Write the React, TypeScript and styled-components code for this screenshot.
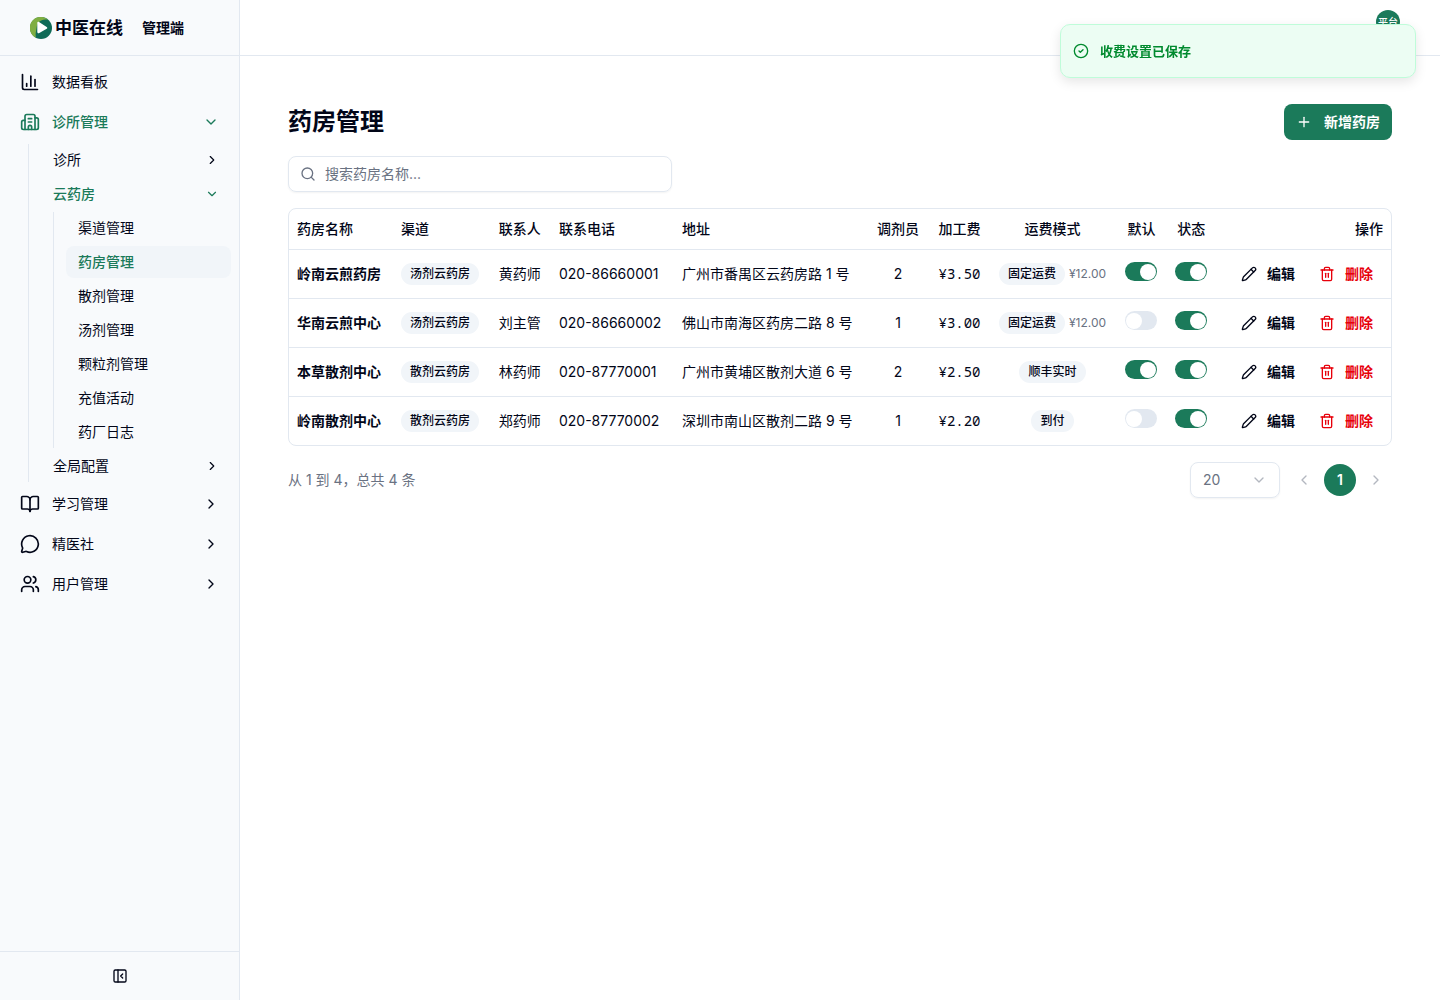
import React, { useState } from 'react';
import styled, { createGlobalStyle, css } from 'styled-components';
import {
  BookOpen,
  Building2,
  ChartColumn,
  ChevronDown,
  ChevronLeft,
  ChevronRight,
  CircleCheck,
  MessageCircle,
  PanelLeftClose,
  Pencil,
  Plus,
  Search,
  Trash2,
  Users,
} from 'lucide-react';

const color = {
  ink: '#020618',
  muted: '#6a7282',
  line: '#e2e8f0',
  soft: '#f1f5f9',
  panel: '#f8fafc',
  brand: '#1b7a5a',
  danger: '#e7000b',
};

const GlobalStyle = createGlobalStyle`
  *, *::before, *::after { box-sizing: border-box; }
  body {
    margin: 0;
    background: #fff;
    color: ${color.ink};
    font: 400 14px/20px Inter, "Noto Sans CJK SC", sans-serif;
    -webkit-font-smoothing: antialiased;
  }
  button, input, select { font: inherit; color: inherit; }
  button { border: 0; padding: 0; background: none; cursor: pointer; }
  a { color: inherit; text-decoration: none; }
  h1, p, ul { margin: 0; padding: 0; }
  ul { list-style: none; }
  svg { flex-shrink: 0; }
`;

const Shell = styled.div`
  display: flex;
  min-height: 100vh;
`;

const Sidebar = styled.aside`
  display: flex;
  flex-direction: column;
  flex: none;
  width: 240px;
  background: ${color.panel};
  border-right: 1px solid ${color.line};
`;

const Brand = styled.div`
  display: flex;
  align-items: center;
  height: 56px;
  padding-left: 30px;
  border-bottom: 1px solid ${color.line};
`;

const BrandName = styled.span`
  margin-left: 3px;
  font-size: 17px;
  line-height: 24px;
  font-weight: 600;
`;

const BrandRole = styled.span`
  margin-left: 19px;
  font-weight: 600;
`;

const Nav = styled.nav`
  flex: 1;
  padding: 8px;
`;

const TopList = styled.ul`
  display: flex;
  flex-direction: column;
  gap: 4px;
`;

const SubList = styled.ul<{ $nested?: boolean }>`
  display: flex;
  flex-direction: column;
  gap: 2px;
  margin-top: ${(p) => (p.$nested ? 2 : 4)}px;
  margin-left: ${(p) => (p.$nested ? 12 : 20)}px;
  padding-left: 12px;
  border-left: 1px solid ${color.line};
`;

const itemStyle = css<{ $open?: boolean }>`
  display: flex;
  align-items: center;
  width: 100%;
  padding: 0 12px;
  border-radius: 8px;
  text-align: left;
  color: ${(p) => (p.$open ? color.brand : color.ink)};
  font-weight: ${(p) => (p.$open ? 500 : 400)};
`;

const TopItem = styled.button<{ $open?: boolean }>`
  ${itemStyle}
  gap: 12px;
  height: 36px;
`;

const SubItem = styled.button<{ $open?: boolean }>`
  ${itemStyle}
  height: 32px;
`;

const LeafLink = styled.a<{ $open?: boolean }>`
  ${itemStyle}
  height: 32px;
  background: ${(p) => (p.$open ? color.soft : 'transparent')};
`;

const ItemLabel = styled.span`
  flex: 1;
`;

const SidebarFoot = styled.div`
  display: flex;
  align-items: center;
  justify-content: center;
  height: 49px;
  border-top: 1px solid ${color.line};
`;

const IconButton = styled.button`
  display: flex;
  align-items: center;
  justify-content: center;
  width: 32px;
  height: 32px;
  &:disabled { opacity: 0.5; }
`;

const Body = styled.div`
  flex: 1;
  min-width: 0;
`;

const TopBar = styled.header`
  display: flex;
  justify-content: flex-end;
  align-items: flex-start;
  height: 56px;
  padding: 10px 40px;
  border-bottom: 1px solid ${color.line};
`;

const Avatar = styled.button`
  width: 24px;
  height: 24px;
  border-radius: 50%;
  background: ${color.brand};
  color: #fff;
  font-size: 10px;
  line-height: 24px;
  font-weight: 500;
`;

const Page = styled.main`
  display: flex;
  flex-direction: column;
  gap: 16px;
  padding: 48px;
`;

const TitleRow = styled.div`
  display: flex;
  align-items: center;
  justify-content: space-between;
`;

const Title = styled.h1`
  font-size: 24px;
  line-height: 32px;
  font-weight: 700;
`;

const PrimaryButton = styled.button`
  display: flex;
  align-items: center;
  gap: 12px;
  height: 36px;
  padding: 0 12px;
  border-radius: 8px;
  background: ${color.brand};
  color: #fff;
  font-weight: 600;
`;

const SearchBox = styled.label`
  display: flex;
  align-items: center;
  gap: 9px;
  width: 384px;
  height: 36px;
  padding: 0 11px;
  border: 1px solid ${color.line};
  border-radius: 8px;
  box-shadow: 0 1px 2px rgba(0, 0, 0, 0.05);
  color: ${color.muted};
`;

const SearchInput = styled.input`
  flex: 1;
  min-width: 0;
  padding: 0;
  border: 0;
  outline: 0;
  background: none;
  color: ${color.ink};
  &::placeholder { color: ${color.muted}; opacity: 1; }
`;

const TableFrame = styled.div`
  border: 1px solid ${color.line};
  border-radius: 8px;
  overflow-x: auto;
`;

const Table = styled.table`
  width: 100%;
  border-collapse: collapse;
  white-space: nowrap;
`;

type Align = 'left' | 'center' | 'right';

const HeadCell = styled.th<{ $align?: Align }>`
  height: 40px;
  padding: 0 8px;
  text-align: ${(p) => p.$align ?? 'left'};
  font-weight: 500;
`;

const Row = styled.tr`
  border-bottom: 1px solid ${color.line};
  tbody &:last-child { border-bottom: 0; }
`;

const Cell = styled.td<{ $align?: Align; $strong?: boolean; $mono?: boolean }>`
  padding: 8px;
  text-align: ${(p) => p.$align ?? 'left'};
  font-weight: ${(p) => (p.$strong ? 600 : 400)};
  ${(p) => p.$mono && 'font-family: "Noto Sans Mono", "Liberation Mono", monospace;'}
`;

const Badge = styled.span`
  display: inline-flex;
  align-items: center;
  padding: 3px 9px;
  border-radius: 11px;
  background: ${color.soft};
  font-size: 12px;
  line-height: 16px;
  font-weight: 500;
`;

const Freight = styled.div`
  display: flex;
  align-items: center;
  justify-content: center;
  gap: 4px;
`;

const FreightFee = styled.span`
  color: ${color.muted};
  font-size: 12px;
  line-height: 16px;
`;

const Switch = styled.input`
  appearance: none;
  display: inline-flex;
  align-items: center;
  width: 32px;
  height: 19px;
  margin: 0;
  padding: 0 1px;
  border-radius: 10px;
  background: ${color.line};
  vertical-align: baseline;
  cursor: pointer;
  &::before {
    content: '';
    width: 16px;
    height: 16px;
    border-radius: 50%;
    background: #fff;
  }
  &:checked { background: ${color.brand}; justify-content: flex-end; }
`;

const Actions = styled.div`
  display: flex;
  justify-content: flex-end;
  gap: 4px;
`;

const ActionButton = styled.button<{ $danger?: boolean }>`
  display: flex;
  align-items: center;
  gap: 10px;
  height: 32px;
  padding: 0 10px;
  color: ${(p) => (p.$danger ? color.danger : color.ink)};
  font-weight: 600;
`;

const Footer = styled.div`
  display: flex;
  align-items: center;
  justify-content: space-between;
  color: ${color.muted};
`;

const Pager = styled.div`
  display: flex;
  align-items: center;
  gap: 8px;
`;

const SizeBox = styled.div`
  display: grid;
  align-items: center;
  width: 90px;
  height: 36px;
  border: 1px solid ${color.line};
  border-radius: 8px;
  box-shadow: 0 1px 2px rgba(0, 0, 0, 0.05);
  > * { grid-area: 1 / 1; }
  > svg { justify-self: end; margin-right: 12px; opacity: 0.5; pointer-events: none; }
`;

const SizeSelect = styled.select`
  appearance: none;
  width: 100%;
  height: 34px;
  padding: 0 12px;
  border: 0;
  background: none;
`;

const PageList = styled.div`
  display: flex;
  gap: 4px;
`;

const PageButton = styled.button`
  width: 32px;
  height: 32px;
  border-radius: 50%;
  background: ${color.brand};
  color: #fff;
  font-weight: 600;
`;

const Toast = styled.div`
  position: fixed;
  top: 24px;
  right: 24px;
  display: flex;
  align-items: center;
  gap: 11px;
  width: 356px;
  height: 54px;
  padding: 0 12px;
  border: 1px solid #bffcd9;
  border-radius: 10px;
  background: #ecfdf3;
  color: #008a2e;
  box-shadow: 0 4px 12px rgba(0, 0, 0, 0.1);
  font-size: 13px;
  font-weight: 600;
`;

const Logo = () => (
  <svg width="22" height="22" viewBox="0 0 22 22" aria-hidden="true">
    <circle cx="11" cy="11" r="11" fill="#0f6b57" />
    <path d="M6 20.8A11 11 0 1 1 18 2.600C12.500 2.400 7.600 4 6.800 9.500C6.300 13.500 5 17 6 20.800Z" fill="#7fae42" />
    <path d="M7.300 5.800v9c0 1.400 1 1.800 2 1.200l7.400-4.200c.8-.5.8-1.300 0-1.800L9 5c-.9-.5-1.700-.2-1.700.8Z" fill="#fff" />
  </svg>
);

const leaves = ['渠道管理', '药房管理', '散剂管理', '汤剂管理', '颗粒剂管理', '充值活动', '药厂日志'];

const modules = [
  { label: '学习管理', Icon: BookOpen },
  { label: '精医社', Icon: MessageCircle },
  { label: '用户管理', Icon: Users },
];

const pharmacies = [
  { name: '岭南云煎药房', channel: '汤剂云药房', contact: '黄药师', phone: '020-86660001', address: '广州市番禺区云药房路 1 号', staff: 2, fee: '¥3.50', mode: '固定运费', freight: '¥12.00', preset: true },
  { name: '华南云煎中心', channel: '汤剂云药房', contact: '刘主管', phone: '020-86660002', address: '佛山市南海区药房二路 8 号', staff: 1, fee: '¥3.00', mode: '固定运费', freight: '¥12.00', preset: false },
  { name: '本草散剂中心', channel: '散剂云药房', contact: '林药师', phone: '020-87770001', address: '广州市黄埔区散剂大道 6 号', staff: 2, fee: '¥2.50', mode: '顺丰实时', freight: '', preset: true },
  { name: '岭南散剂中心', channel: '散剂云药房', contact: '郑药师', phone: '020-87770002', address: '深圳市南山区散剂二路 9 号', staff: 1, fee: '¥2.20', mode: '到付', freight: '', preset: false },
];

const columns: { label: string; align?: Align }[] = [
  { label: '药房名称' },
  { label: '渠道' },
  { label: '联系人' },
  { label: '联系电话' },
  { label: '地址' },
  { label: '调剂员', align: 'center' },
  { label: '加工费', align: 'right' },
  { label: '运费模式', align: 'center' },
  { label: '默认', align: 'center' },
  { label: '状态', align: 'center' },
  { label: '操作', align: 'right' },
];

export default function App() {
  const [query, setQuery] = useState('');
  const rows = pharmacies.filter((p) => p.name.includes(query));

  return (
    <Shell>
      <GlobalStyle />
      <Sidebar>
        <Brand>
          <Logo />
          <BrandName>中医在线</BrandName>
          <BrandRole>管理端</BrandRole>
        </Brand>
        <Nav>
          <TopList>
            <li>
              <TopItem>
                <ChartColumn size={20} />
                <ItemLabel>数据看板</ItemLabel>
              </TopItem>
            </li>
            <li>
              <TopItem $open aria-expanded="true">
                <Building2 size={20} />
                <ItemLabel>诊所管理</ItemLabel>
                <ChevronDown size={16} />
              </TopItem>
              <SubList>
                <li>
                  <SubItem>
                    <ItemLabel>诊所</ItemLabel>
                    <ChevronRight size={14} />
                  </SubItem>
                </li>
                <li>
                  <SubItem $open aria-expanded="true">
                    <ItemLabel>云药房</ItemLabel>
                    <ChevronDown size={14} />
                  </SubItem>
                  <SubList $nested>
                    {leaves.map((leaf) => (
                      <li key={leaf}>
                        <LeafLink href="#" $open={leaf === '药房管理'}>{leaf}</LeafLink>
                      </li>
                    ))}
                  </SubList>
                </li>
                <li>
                  <SubItem>
                    <ItemLabel>全局配置</ItemLabel>
                    <ChevronRight size={14} />
                  </SubItem>
                </li>
              </SubList>
            </li>
            {modules.map(({ label, Icon }) => (
              <li key={label}>
                <TopItem>
                  <Icon size={20} />
                  <ItemLabel>{label}</ItemLabel>
                  <ChevronRight size={16} />
                </TopItem>
              </li>
            ))}
          </TopList>
        </Nav>
        <SidebarFoot>
          <IconButton aria-label="收起侧栏">
            <PanelLeftClose size={16} />
          </IconButton>
        </SidebarFoot>
      </Sidebar>

      <Body>
        <TopBar>
          <Avatar>平台</Avatar>
        </TopBar>
        <Page>
          <TitleRow>
            <Title>药房管理</Title>
            <PrimaryButton>
              <Plus size={16} />
              新增药房
            </PrimaryButton>
          </TitleRow>
          <SearchBox>
            <Search size={16} />
            <SearchInput
              aria-label="搜索药房名称"
              placeholder="搜索药房名称..."
              value={query}
              onChange={(e) => setQuery(e.target.value)}
            />
          </SearchBox>
          <TableFrame>
            <Table>
              <thead>
                <Row>
                  {columns.map((c) => (
                    <HeadCell key={c.label} $align={c.align}>{c.label}</HeadCell>
                  ))}
                </Row>
              </thead>
              <tbody>
                {rows.map((p) => (
                  <Row key={p.name}>
                    <Cell $strong>{p.name}</Cell>
                    <Cell><Badge>{p.channel}</Badge></Cell>
                    <Cell>{p.contact}</Cell>
                    <Cell>{p.phone}</Cell>
                    <Cell>{p.address}</Cell>
                    <Cell $align="center">{p.staff}</Cell>
                    <Cell $align="right" $mono>{p.fee}</Cell>
                    <Cell>
                      <Freight>
                        <Badge>{p.mode}</Badge>
                        {p.freight && <FreightFee>{p.freight}</FreightFee>}
                      </Freight>
                    </Cell>
                    <Cell $align="center">
                      <Switch type="checkbox" role="switch" aria-label={`${p.name}默认`} defaultChecked={p.preset} />
                    </Cell>
                    <Cell $align="center">
                      <Switch type="checkbox" role="switch" aria-label={`${p.name}状态`} defaultChecked />
                    </Cell>
                    <Cell>
                      <Actions>
                        <ActionButton><Pencil size={16} />编辑</ActionButton>
                        <ActionButton $danger><Trash2 size={16} />删除</ActionButton>
                      </Actions>
                    </Cell>
                  </Row>
                ))}
              </tbody>
            </Table>
          </TableFrame>
          <Footer>
            <p>从 1 到 4，总共 4 条</p>
            <Pager>
              <SizeBox>
                <SizeSelect aria-label="每页条数" defaultValue="20">
                  <option>10</option>
                  <option>20</option>
                  <option>50</option>
                </SizeSelect>
                <ChevronDown size={16} />
              </SizeBox>
              <PageList>
                <IconButton disabled aria-label="上一页"><ChevronLeft size={16} /></IconButton>
                <PageButton aria-current="page">1</PageButton>
                <IconButton disabled aria-label="下一页"><ChevronRight size={16} /></IconButton>
              </PageList>
            </Pager>
          </Footer>
        </Page>
      </Body>

      <Toast role="status">
        <CircleCheck size={16} />
        收费设置已保存
      </Toast>
    </Shell>
  );
}
